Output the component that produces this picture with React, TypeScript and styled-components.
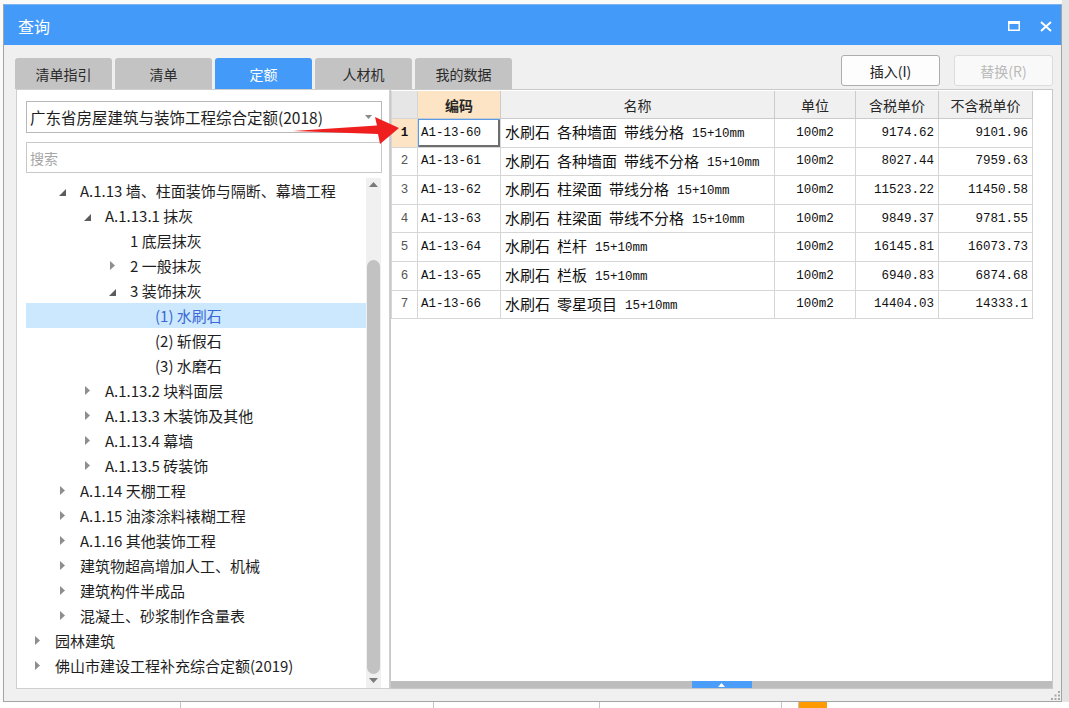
import React from "react";
import styled, { createGlobalStyle } from "styled-components";

type Toggle = "open" | "closed" | undefined;

interface TreeNode {
  label: string;
  level: number;
  toggle?: Toggle;
  selected?: boolean;
}

interface QuotaRow {
  code: string;
  name: string[];
  unit: string;
  tax: string;
  noTax: string;
}

const tabs = ["清单指引", "清单", "定额", "人材机", "我的数据"];
const activeTab = "定额";

const tree: TreeNode[] = [
  { label: "A.1.13 墙、柱面装饰与隔断、幕墙工程", level: 1, toggle: "open" },
  { label: "A.1.13.1 抹灰", level: 2, toggle: "open" },
  { label: "1 底层抹灰", level: 3 },
  { label: "2 一般抹灰", level: 3, toggle: "closed" },
  { label: "3 装饰抹灰", level: 3, toggle: "open" },
  { label: "(1) 水刷石", level: 4, selected: true },
  { label: "(2) 斩假石", level: 4 },
  { label: "(3) 水磨石", level: 4 },
  { label: "A.1.13.2 块料面层", level: 2, toggle: "closed" },
  { label: "A.1.13.3 木装饰及其他", level: 2, toggle: "closed" },
  { label: "A.1.13.4 幕墙", level: 2, toggle: "closed" },
  { label: "A.1.13.5 砖装饰", level: 2, toggle: "closed" },
  { label: "A.1.14 天棚工程", level: 1, toggle: "closed" },
  { label: "A.1.15 油漆涂料裱糊工程", level: 1, toggle: "closed" },
  { label: "A.1.16 其他装饰工程", level: 1, toggle: "closed" },
  { label: "建筑物超高增加人工、机械", level: 1, toggle: "closed" },
  { label: "建筑构件半成品", level: 1, toggle: "closed" },
  { label: "混凝土、砂浆制作含量表", level: 1, toggle: "closed" },
  { label: "园林建筑", level: 0, toggle: "closed" },
  { label: "佛山市建设工程补充综合定额(2019)", level: 0, toggle: "closed" },
];

const rows: QuotaRow[] = [
  { code: "A1-13-60", name: ["水刷石", "各种墙面", "带线分格"], unit: "100m2", tax: "9174.62", noTax: "9101.96" },
  { code: "A1-13-61", name: ["水刷石", "各种墙面", "带线不分格"], unit: "100m2", tax: "8027.44", noTax: "7959.63" },
  { code: "A1-13-62", name: ["水刷石", "柱梁面", "带线分格"], unit: "100m2", tax: "11523.22", noTax: "11450.58" },
  { code: "A1-13-63", name: ["水刷石", "柱梁面", "带线不分格"], unit: "100m2", tax: "9849.37", noTax: "9781.55" },
  { code: "A1-13-64", name: ["水刷石", "栏杆"], unit: "100m2", tax: "16145.81", noTax: "16073.73" },
  { code: "A1-13-65", name: ["水刷石", "栏板"], unit: "100m2", tax: "6940.83", noTax: "6874.68" },
  { code: "A1-13-66", name: ["水刷石", "零星项目"], unit: "100m2", tax: "14404.03", noTax: "14333.1" },
];

const App: React.FC = () => {
  return (
    <Desktop>
      <GlobalStyle />
      <Dialog>
        <TitleBar>
          <Title>查询</Title>
          <WindowButtons>
            <svg width="12" height="10" viewBox="0 0 12 10">
              <rect x="0.75" y="0.75" width="10.5" height="8.5" fill="none" stroke="#fff" strokeWidth="1.5" />
              <rect x="0" y="0" width="12" height="3" fill="#fff" />
            </svg>
            <svg width="12" height="11" viewBox="0 0 12 11">
              <path d="M1 1L11 10M11 1L1 10" stroke="#fff" strokeWidth="2" />
            </svg>
          </WindowButtons>
        </TitleBar>

        <Content>
          <TopRow>
            <Tabs>
              {tabs.map((t) => (
                <Tab key={t} $active={t === activeTab}>
                  {t}
                </Tab>
              ))}
            </Tabs>
            <Actions>
              <ActionButton>插入(I)</ActionButton>
              <ActionButton disabled>替换(R)</ActionButton>
            </Actions>
          </TopRow>

          <Main>
            <LeftPanel>
              <Select>
                <span>广东省房屋建筑与装饰工程综合定额(2018)</span>
                <svg width="7" height="4" viewBox="0 0 7 4">
                  <path d="M0 0H7L3.5 4Z" fill="#8a8a8a" />
                </svg>
              </Select>
              <Search>搜索</Search>
              <TreeArea>
                <TreeList>
                  {tree.map((n, i) => (
                    <TreeRow key={i} $level={n.level} $selected={!!n.selected}>
                      <ToggleBox>
                        {n.toggle === "closed" && (
                          <svg width="5" height="9" viewBox="0 0 5 9">
                            <path d="M0 0L5 4.5L0 9Z" fill="#8e8e8e" />
                          </svg>
                        )}
                        {n.toggle === "open" && (
                          <svg width="7" height="7" viewBox="0 0 7 7" style={{ marginTop: 3 }}>
                            <path d="M7 0V7H0Z" fill="#5c5c5c" />
                          </svg>
                        )}
                      </ToggleBox>
                      <span>{n.label}</span>
                    </TreeRow>
                  ))}
                </TreeList>
                <VScroll>
                  <svg width="9" height="5" viewBox="0 0 9 5">
                    <path d="M0 5L4.5 0L9 5Z" fill="#7a7a7a" />
                  </svg>
                  <ThumbTrack>
                    <Thumb />
                  </ThumbTrack>
                  <svg width="9" height="5" viewBox="0 0 9 5">
                    <path d="M0 0H9L4.5 5Z" fill="#7a7a7a" />
                  </svg>
                </VScroll>
              </TreeArea>
            </LeftPanel>

            <RightPanel>
              <GridRow $header>
                <Corner />
                <HeadCell $hot>编码</HeadCell>
                <HeadCell>名称</HeadCell>
                <HeadCell>单位</HeadCell>
                <HeadCell>含税单价</HeadCell>
                <HeadCell>不含税单价</HeadCell>
              </GridRow>
              {rows.map((r, i) => (
                <GridRow key={r.code}>
                  <RowNo $hot={i === 0}>{i + 1}</RowNo>
                  <CodeCell $focused={i === 0}>{r.code}</CodeCell>
                  <NameCell>
                    {r.name.map((w) => (
                      <Word key={w}>{w}</Word>
                    ))}
                    <Spec>15+10mm</Spec>
                  </NameCell>
                  <MonoCell $align="center">{r.unit}</MonoCell>
                  <MonoCell $align="right">{r.tax}</MonoCell>
                  <MonoCell $align="right">{r.noTax}</MonoCell>
                </GridRow>
              ))}
              <GridFill />
              <SplitBar>
                <SplitHandle>
                  <svg width="7" height="4" viewBox="0 0 7 4">
                    <path d="M0 4L3.5 0L7 4Z" fill="#fff" />
                  </svg>
                </SplitHandle>
              </SplitBar>
            </RightPanel>
          </Main>
        </Content>

        <Grip width="9" height="9" viewBox="0 0 9 9">
          {[
            [7, 0],
            [7, 3.5],
            [3.5, 3.5],
            [7, 7],
            [3.5, 7],
            [0, 7],
          ].map(([x, y], i) => (
            <rect key={i} x={x} y={y} width="2" height="2" fill="#a8a8a8" />
          ))}
        </Grip>
      </Dialog>

      <BackStrip>
        <BackCell $w={180} />
        <BackCell $w={252} />
        <BackCell $w={165} />
        <BackCell $w={181} />
        <BackCell $w={16} />
        <Orange />
      </BackStrip>

      <Arrow width="1069" height="708" viewBox="0 0 1069 708">
        <path d="M293 131L377 125.5L375 117L399 128L380 144L378 134Z" fill="#ef1f1f" />
      </Arrow>
    </Desktop>
  );
};

export default App;

const GlobalStyle = createGlobalStyle`
  html, body {
    margin: 0;
    padding: 0;
  }
  body {
    background: #f2f2f2;
    font-family: "Noto Sans CJK SC", sans-serif;
    overflow: hidden;
  }
`;

const Desktop = styled.div`
  position: relative;
  width: 1069px;
  height: 708px;
  box-sizing: border-box;
  padding: 4px 0 0 3px;
  display: flex;
  flex-direction: column;
  background: linear-gradient(to right, #fafafa 0 1062px, #e4e4e4 1062px);
`;

const Dialog = styled.div`
  position: relative;
  width: 1059px;
  height: 698px;
  box-sizing: border-box;
  border: 1px solid #a3a3a3;
  border-top-color: #7fb4f0;
  background: #f0f0f0;
  display: flex;
  flex-direction: column;
`;

const TitleBar = styled.div`
  height: 40px;
  flex-shrink: 0;
  background: #439af8;
  display: flex;
  align-items: center;
  justify-content: space-between;
  padding: 0 9px 0 14px;
`;

const Title = styled.div`
  color: #fff;
  font-size: 16px;
  margin-top: 1px;
`;

const WindowButtons = styled.div`
  display: flex;
  align-items: center;
  gap: 20px;
  margin-top: 2px;
`;

const Content = styled.div`
  flex: 1;
  display: flex;
  flex-direction: column;
  padding: 10px 8px 12px 11px;
  min-height: 0;
`;

const TopRow = styled.div`
  display: flex;
  justify-content: space-between;
  align-items: flex-end;
  flex-shrink: 0;
`;

const Tabs = styled.div`
  display: flex;
  gap: 3px;
`;

const Tab = styled.div<{ $active: boolean }>`
  width: 97px;
  height: 31px;
  border-radius: 3px 3px 0 0;
  display: flex;
  align-items: center;
  justify-content: center;
  font-size: 14px;
  color: ${({ $active }) => ($active ? "#fff" : "#2a2a2a")};
  background: ${({ $active }) => ($active ? "#439af8" : "#c3c3c3")};
`;

const Actions = styled.div`
  display: flex;
  gap: 14px;
  margin-bottom: 3px;
`;

const ActionButton = styled.button`
  width: 99px;
  height: 31px;
  box-sizing: border-box;
  background: #fdfdfd;
  border: 1px solid #adadad;
  border-radius: 3px;
  font-family: "Noto Sans CJK SC", sans-serif;
  font-size: 14px;
  color: #222;
  padding: 0;

  &:disabled {
    border-color: #dcdcdc;
    color: #b9b9b9;
    background: #f9f9f9;
  }
`;

const Main = styled.div`
  flex: 1;
  display: flex;
  min-height: 0;
`;

const LeftPanel = styled.div`
  width: 374px;
  margin-left: 1px;
  box-sizing: border-box;
  border: 1px solid #cfcfcf;
  background: #fff;
  display: flex;
  flex-direction: column;
  padding: 11px 8px 0 9px;
`;

const Select = styled.div`
  height: 32px;
  box-sizing: border-box;
  border: 1px solid #b8b8b8;
  display: flex;
  align-items: center;
  justify-content: space-between;
  padding: 0 9px 0 3px;
  font-size: 15.5px;
  color: #1e1e1e;
  flex-shrink: 0;
  margin-right: -1px;
`;

const Search = styled.div`
  height: 31px;
  box-sizing: border-box;
  margin-top: 9px;
  border: 1px solid #c8c8c8;
  display: flex;
  align-items: center;
  padding-left: 3px;
  font-size: 14px;
  color: #a6a6a6;
  flex-shrink: 0;
  margin-right: -1px;
`;

const TreeArea = styled.div`
  flex: 1;
  display: flex;
  margin-top: 5px;
  min-height: 0;
`;

const TreeList = styled.div`
  flex: 1;
  display: flex;
  flex-direction: column;
`;

const TreeRow = styled.div<{ $level: number; $selected: boolean }>`
  height: 25px;
  flex-shrink: 0;
  display: flex;
  align-items: center;
  padding-left: ${({ $level }) => 4 + $level * 25}px;
  font-size: 15px;
  white-space: nowrap;
  color: ${({ $selected }) => ($selected ? "#3a68d4" : "#1e1e1e")};
  background: ${({ $selected }) => ($selected ? "#cce8ff" : "transparent")};
`;

const ToggleBox = styled.div`
  width: 14px;
  height: 14px;
  margin-right: 11px;
  display: flex;
  align-items: center;
  justify-content: center;
`;

const VScroll = styled.div`
  width: 15px;
  background: #f0f0f0;
  display: flex;
  flex-direction: column;
  align-items: center;
  padding: 4px 0 5px;
  box-sizing: border-box;
`;

const ThumbTrack = styled.div`
  flex: 1;
  width: 100%;
  display: flex;
  flex-direction: column;
  padding: 73px 1px 4px;
  box-sizing: border-box;
`;

const Thumb = styled.div`
  flex: 1;
  background: #c2c2c2;
  border-radius: 7px;
`;

const RightPanel = styled.div`
  flex: 1;
  box-sizing: border-box;
  border: 1px solid #c9c9c9;
  background: #fff;
  display: flex;
  flex-direction: column;
  padding-top: 1px;
`;

const GridRow = styled.div<{ $header?: boolean }>`
  display: grid;
  grid-template-columns: 27px 83px 274px 81px 83px 94px;
  height: ${({ $header }) => ($header ? "28px" : "28.6px")};
  flex-shrink: 0;
  width: 642px;
`;

const Cell = styled.div`
  box-sizing: border-box;
  border-right: 1px solid #d6d6d6;
  border-bottom: 1px solid #d6d6d6;
  display: flex;
  align-items: center;
  overflow: hidden;
  white-space: nowrap;
`;

const Corner = styled(Cell)`
  background: #e6e6e6;
  border-left: 1px solid #d6d6d6;
`;

const HeadCell = styled(Cell)<{ $hot?: boolean }>`
  justify-content: center;
  font-size: 14px;
  color: #262626;
  font-weight: ${({ $hot }) => ($hot ? 700 : 400)};
  background: ${({ $hot }) => ($hot ? "#fde4c4" : "#f0f0f0")};
  border-right-color: #cbcbcb;
  border-bottom-color: #cbcbcb;
`;

const RowNo = styled(Cell)<{ $hot?: boolean }>`
  justify-content: center;
  border-left: 1px solid #d6d6d6;
  font-family: "Liberation Mono", monospace;
  font-size: 12.5px;
  color: ${({ $hot }) => ($hot ? "#111" : "#555")};
  font-weight: ${({ $hot }) => ($hot ? 700 : 400)};
  background: ${({ $hot }) => ($hot ? "#fde4c4" : "#fff")};
`;

const CodeCell = styled(Cell)<{ $focused?: boolean }>`
  padding-left: 3px;
  font-family: "Liberation Mono", monospace;
  font-size: 12.5px;
  color: #111;
  box-shadow: ${({ $focused }) =>
    $focused ? "inset 1px 1px 0 #5a9ae6, inset -2px -2px 0 #6e6e6e" : "none"};
`;

const NameCell = styled(Cell)`
  display: block;
  padding-left: 4px;
  line-height: 25px;
  font-size: 15px;
  color: #111;
`;

const Word = styled.span`
  margin-right: 7px;
`;

const Spec = styled.span`
  font-family: "Liberation Mono", monospace;
  font-size: 12.5px;
  margin-left: 1px;
  vertical-align: 1px;
`;

const MonoCell = styled(Cell)<{ $align: "center" | "right" }>`
  justify-content: ${({ $align }) => ($align === "center" ? "center" : "flex-end")};
  padding-right: ${({ $align }) => ($align === "right" ? "4px" : "0")};
  font-family: "Liberation Mono", monospace;
  font-size: 12.5px;
  color: #111;
`;

const GridFill = styled.div`
  flex: 1;
`;

const SplitBar = styled.div`
  height: 7px;
  flex-shrink: 0;
  background: #bdbdbd;
  display: flex;
  justify-content: center;
`;

const SplitHandle = styled.div`
  width: 60px;
  background: #4a9df8;
  display: flex;
  align-items: center;
  justify-content: center;
`;

const Grip = styled.svg`
  position: absolute;
  right: 1px;
  bottom: 1px;
`;

const BackStrip = styled.div`
  flex: 1;
  display: flex;
  background: #fff;
  margin-left: -3px;
`;

const BackCell = styled.div<{ $w: number }>`
  width: ${({ $w }) => $w}px;
  border-right: 1px solid #c4c4c4;
`;

const Orange = styled.div`
  width: 28px;
  background: #ff9a00;
`;

const Arrow = styled.svg`
  position: absolute;
  left: 0;
  top: 0;
  pointer-events: none;
`;
